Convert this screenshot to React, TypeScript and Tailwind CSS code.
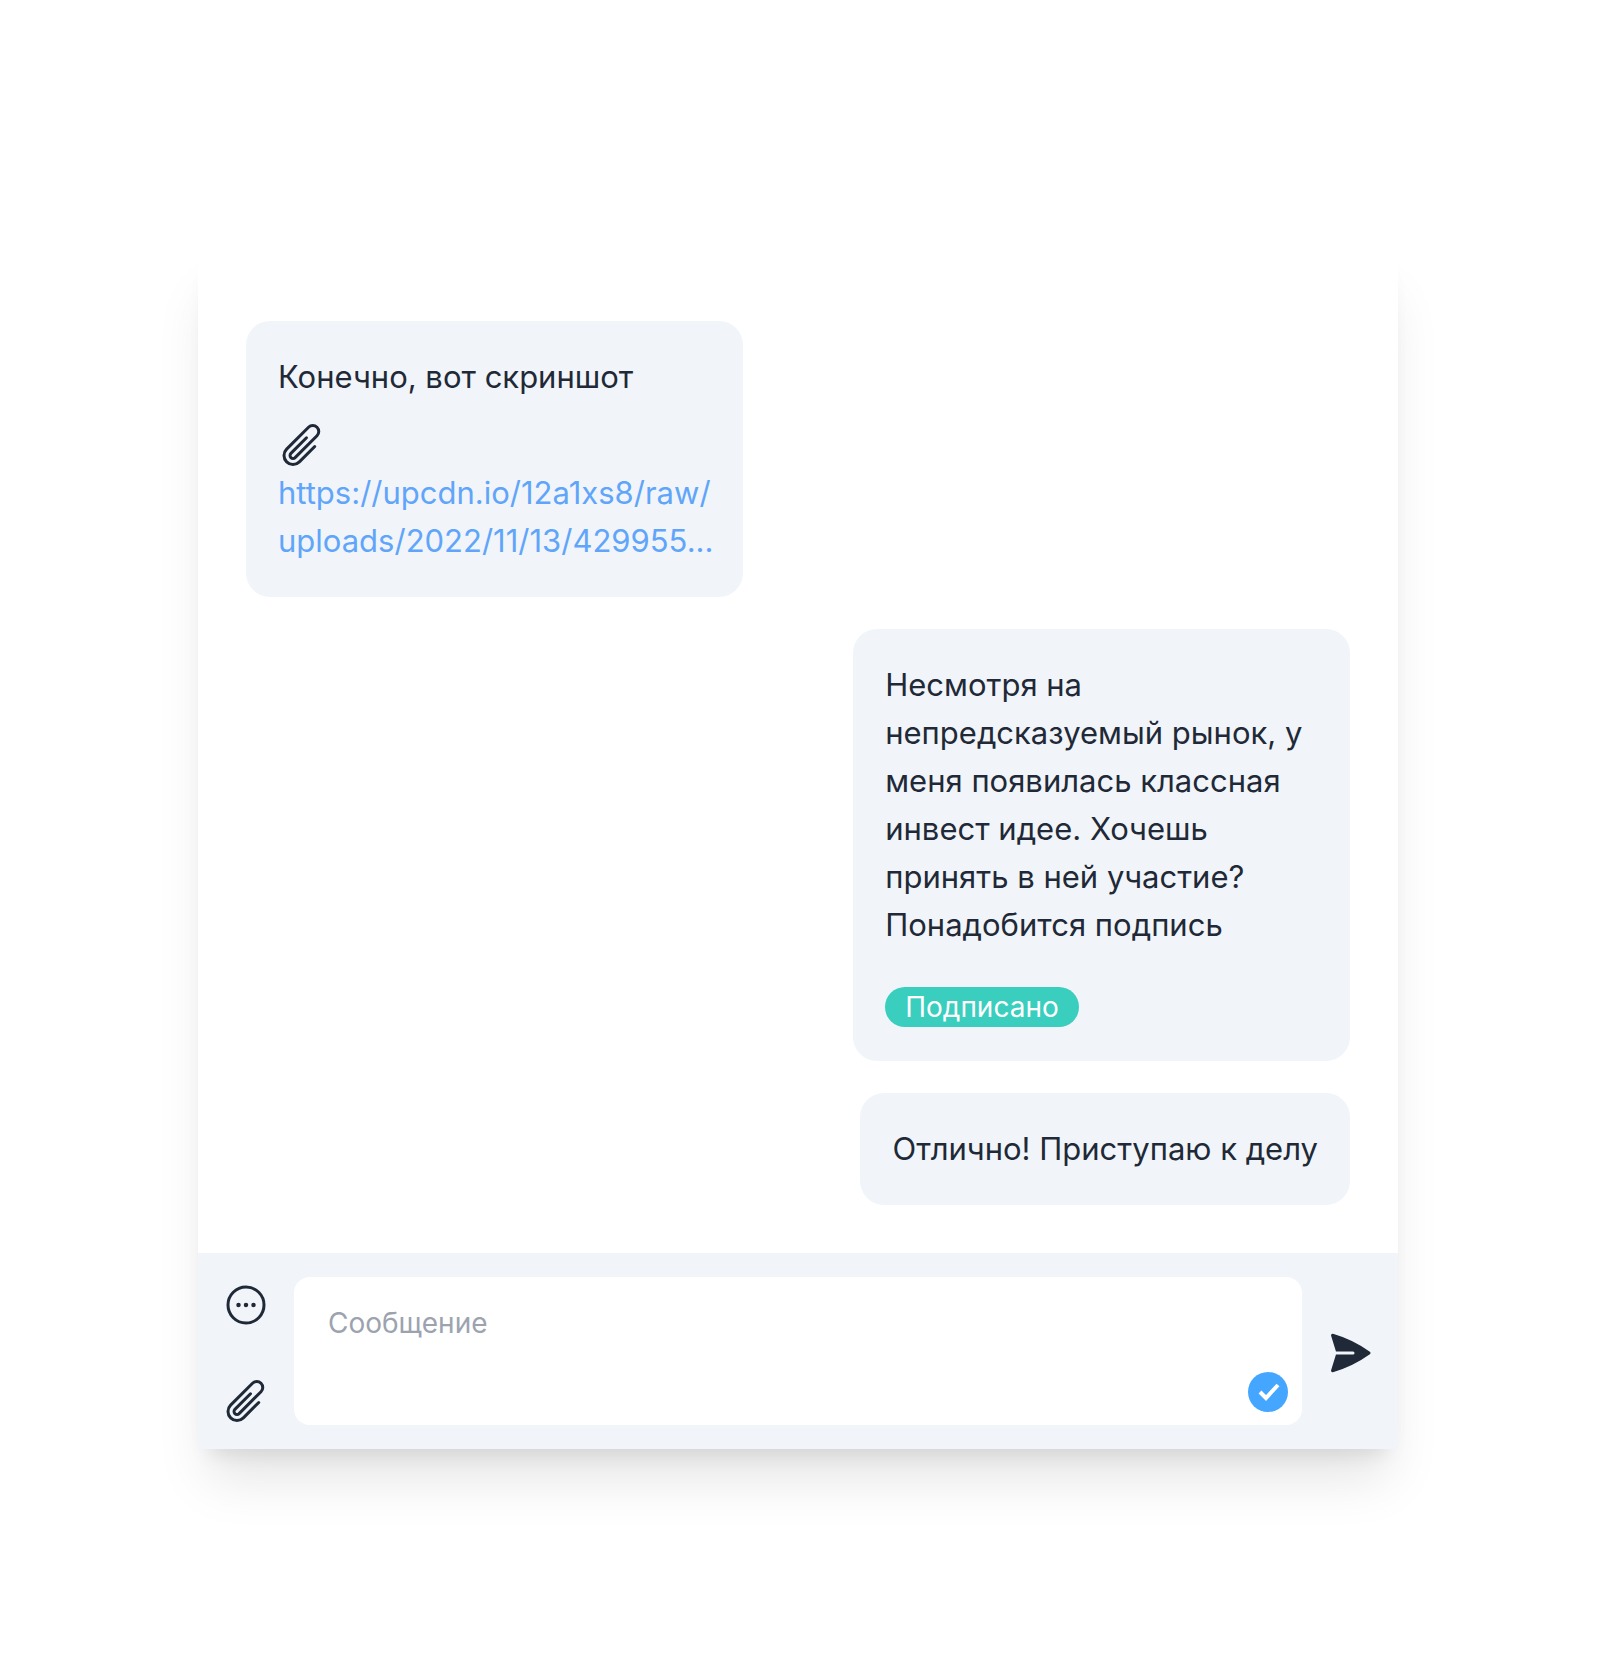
import { useState } from "react";
import type { ReactNode } from "react";

function PaperClip() {
  return (
    <svg viewBox="0 0 24 24" fill="none" stroke="currentColor" strokeWidth="1.5" strokeLinecap="round" strokeLinejoin="round" className="block size-12" aria-hidden="true">
      <path d="M18.375 12.739l-7.693 7.693a4.5 4.5 0 01-6.364-6.364l10.94-10.94A3 3 0 1119.5 7.372L8.552 18.32m.009-.01l-.01.01m5.699-9.941l-7.81 7.81a1.5 1.5 0 002.112 2.13" />
    </svg>
  );
}

function EllipsisCircle() {
  return (
    <svg viewBox="0 0 24 24" fill="none" stroke="currentColor" strokeWidth="1.5" strokeLinecap="round" strokeLinejoin="round" className="block size-12" aria-hidden="true">
      <path d="M8.625 12a.375.375 0 11-.75 0 .375.375 0 01.75 0zm0 0H8.25m4.125 0a.375.375 0 11-.75 0 .375.375 0 01.75 0zm0 0H12m4.125 0a.375.375 0 11-.75 0 .375.375 0 01.75 0zm0 0h-.375M21 12a9 9 0 11-18 0 9 9 0 0118 0z" />
    </svg>
  );
}

function PaperAirplane() {
  return (
    <svg viewBox="0 0 24 24" fill="currentColor" className="block size-12" aria-hidden="true">
      <path d="M3.478 2.405a.75.75 0 00-.926.94l2.432 7.905H13.5a.75.75 0 010 1.5H4.984l-2.432 7.905a.75.75 0 00.926.94 60.519 60.519 0 0018.445-8.986.75.75 0 000-1.218A60.517 60.517 0 003.478 2.405z" />
    </svg>
  );
}

function CheckMark() {
  return (
    <svg viewBox="0 0 40 40" fill="none" stroke="currentColor" strokeWidth="4" className="block size-10" aria-hidden="true">
      <path d="M12 20l6 6L30 13" />
    </svg>
  );
}

function Bubble({ own = false, children }: { own?: boolean; children: ReactNode }) {
  return (
    <li className={`max-w-[45%] rounded-3xl bg-slate-100 p-8 ${own ? "self-end" : "self-start"}`}>
      {children}
    </li>
  );
}

export default function App() {
  const [text, setText] = useState("");

  return (
    <div className="pt-[249px] pr-[210px] pb-[223px] pl-[198px] font-['Inter',sans-serif] text-[31px] leading-[48px] text-[#1f2937]">
      <main className="bg-white shadow-[0_40px_50px_-10px_rgb(0_0_0/0.1),0_16px_20px_-12px_rgb(0_0_0/0.1)]">
        <ul className="flex flex-col gap-8 px-12 pt-[72px] pb-12">
          <Bubble>
            <p>Конечно, вот скриншот</p>
            <div className="mt-5">
              <PaperClip />
            </div>
            <a href="https://upcdn.io/12a1xs8/raw/uploads/2022/11/13/429955" className="block text-[#60a5fa]">
              https://upcdn.io/12a1xs8/raw/
              <wbr />
              uploads/2022/11/13/429955...
            </a>
          </Bubble>
          <Bubble own>
            <p>
              Несмотря на непредсказуемый рынок, у меня появилась классная инвест идее. Хочешь принять в ней участие?
              Понадобится подпись
            </p>
            <span className="mt-[38px] mb-0.5 block w-fit rounded-full bg-[#39cebe] px-5 text-[28px] leading-10 text-white">
              Подписано
            </span>
          </Bubble>
          <Bubble own>
            <p>Отлично! Приступаю к делу</p>
          </Bubble>
        </ul>

        <form onSubmit={(e) => e.preventDefault()} className="flex items-stretch gap-6 bg-slate-100 p-6">
          <div className="flex flex-col justify-between pt-1">
            <button type="button" aria-label="Меню">
              <EllipsisCircle />
            </button>
            <button type="button" aria-label="Прикрепить файл">
              <PaperClip />
            </button>
          </div>
          <div className="relative min-w-0 grow">
            <textarea
              aria-label="Сообщение"
              placeholder="Сообщение"
              value={text}
              onChange={(e) => setText(e.target.value)}
              className="block h-[148px] w-full resize-none rounded-2xl bg-white px-[34px] py-[26px] text-[28px] leading-10 outline-none placeholder:text-[#9ca3af]"
            />
            <button type="button" aria-label="Подписать" className="absolute right-3.5 bottom-[13px] rounded-full bg-[#45a6ff] text-white">
              <CheckMark />
            </button>
          </div>
          <button type="submit" aria-label="Отправить" className="pt-1">
            <PaperAirplane />
          </button>
        </form>
      </main>
    </div>
  );
}
